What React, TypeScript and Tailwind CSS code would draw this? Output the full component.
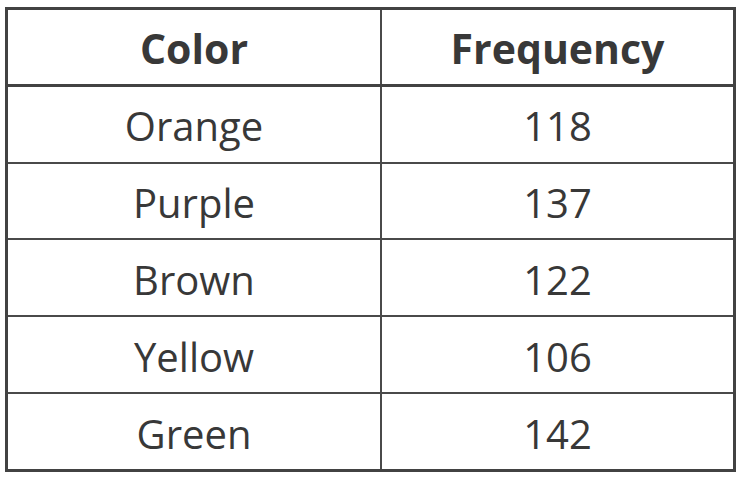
import React from "react";

const rows: [string, string][] = [
  ["Orange", "118"],
  ["Purple", "137"],
  ["Brown", "122"],
  ["Yellow", "106"],
  ["Green", "142"],
];

export default function App() {
  return (
    <div className="w-[744px] h-[480px] bg-white pl-[5px] pt-[7px]" style={{ fontFamily: '"Open Sans", sans-serif' }}>
      <div className="w-[731px] h-[465px] border-[3px] border-[#424242] flex flex-col text-[#383838]">
        <div className="grid grid-cols-[374px_1fr] h-[77px] border-b-[3px] border-[#424242] text-[41px] leading-none font-bold">
          <div className="border-r-2 border-[#4a4a4a] flex items-center justify-center pt-[3px]">Color</div>
          <div className="flex items-center justify-center pt-[3px]">Frequency</div>
        </div>
        {rows.map(([c, f], i) => (
          <div
            key={c}
            className={`grid grid-cols-[374px_1fr] text-[40px] leading-none ${i === 0 ? "h-[75px]" : "h-[77px] border-t-2 border-[#4a4a4a]"} ${i === rows.length - 1 ? "h-[76px]" : ""}`}
          >
            <div className="border-r-2 border-[#4a4a4a] flex items-center justify-center pt-[4px]">{c}</div>
            <div className="flex items-center justify-center pt-[4px]">{f}</div>
          </div>
        ))}
      </div>
    </div>
  );
}
